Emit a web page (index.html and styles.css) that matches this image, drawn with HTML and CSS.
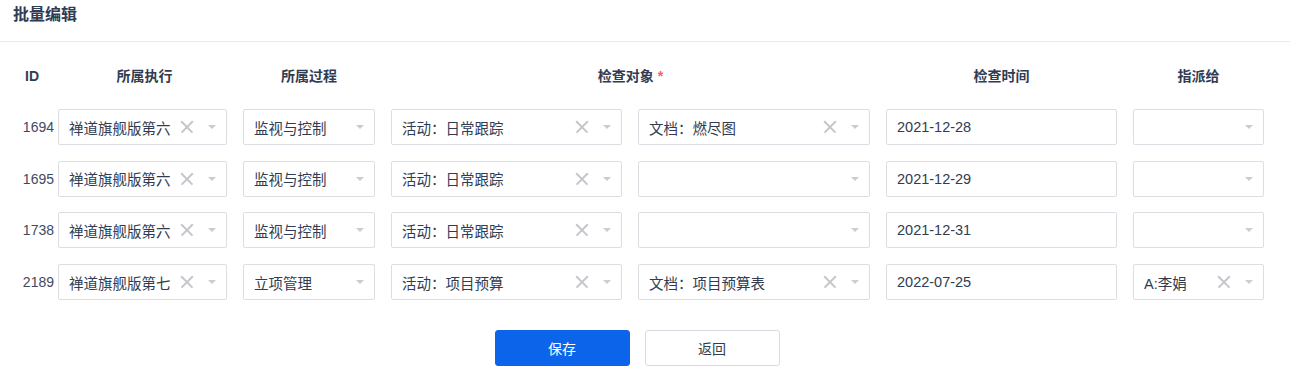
FILE: index.html
```html
<!DOCTYPE html>
<html lang="zh-CN">
<head>
    <meta charset="UTF-8">
    <title>批量编辑</title>
    <link rel="stylesheet" href="styles.css">
</head>
<body>
    <div class="modal-header">批量编辑</div>

    <div class="batch-form">
        <div class="grid">
            <!-- Header -->
            <div class="th th-id">ID</div>
            <div class="th">所属执行</div>
            <div class="th">所属过程</div>
            <div class="th span-2">检查对象 <span class="required">*</span></div>
            <div class="th">检查时间</div>
            <div class="th">指派给</div>

            <!-- Row 1694 -->
            <div class="td td-id">1694</div>
            <div class="td first"><div class="picker"><span class="value">禅道旗舰版第六</span><span class="clear"></span><span class="caret"></span></div></div>
            <div class="td"><div class="picker"><span class="value">监视与控制</span><span class="caret"></span></div></div>
            <div class="td"><div class="picker"><span class="value">活动：日常跟踪</span><span class="clear"></span><span class="caret"></span></div></div>
            <div class="td"><div class="picker"><span class="value">文档：燃尽图</span><span class="clear"></span><span class="caret"></span></div></div>
            <div class="td"><div class="input">2021-12-28</div></div>
            <div class="td"><div class="picker"><span class="value"></span><span class="caret"></span></div></div>

            <!-- Row 1695 -->
            <div class="td td-id">1695</div>
            <div class="td first"><div class="picker"><span class="value">禅道旗舰版第六</span><span class="clear"></span><span class="caret"></span></div></div>
            <div class="td"><div class="picker"><span class="value">监视与控制</span><span class="caret"></span></div></div>
            <div class="td"><div class="picker"><span class="value">活动：日常跟踪</span><span class="clear"></span><span class="caret"></span></div></div>
            <div class="td"><div class="picker"><span class="value"></span><span class="caret"></span></div></div>
            <div class="td"><div class="input">2021-12-29</div></div>
            <div class="td"><div class="picker"><span class="value"></span><span class="caret"></span></div></div>

            <!-- Row 1738 -->
            <div class="td td-id">1738</div>
            <div class="td first"><div class="picker"><span class="value">禅道旗舰版第六</span><span class="clear"></span><span class="caret"></span></div></div>
            <div class="td"><div class="picker"><span class="value">监视与控制</span><span class="caret"></span></div></div>
            <div class="td"><div class="picker"><span class="value">活动：日常跟踪</span><span class="clear"></span><span class="caret"></span></div></div>
            <div class="td"><div class="picker"><span class="value"></span><span class="caret"></span></div></div>
            <div class="td"><div class="input">2021-12-31</div></div>
            <div class="td"><div class="picker"><span class="value"></span><span class="caret"></span></div></div>

            <!-- Row 2189 -->
            <div class="td td-id">2189</div>
            <div class="td first"><div class="picker"><span class="value">禅道旗舰版第七</span><span class="clear"></span><span class="caret"></span></div></div>
            <div class="td"><div class="picker"><span class="value">立项管理</span><span class="caret"></span></div></div>
            <div class="td"><div class="picker"><span class="value">活动：项目预算</span><span class="clear"></span><span class="caret"></span></div></div>
            <div class="td"><div class="picker"><span class="value">文档：项目预算表</span><span class="clear"></span><span class="caret"></span></div></div>
            <div class="td"><div class="input">2022-07-25</div></div>
            <div class="td"><div class="picker"><span class="value">A:李娟</span><span class="clear"></span><span class="caret"></span></div></div>
        </div>

        <div class="actions">
            <button class="btn btn-primary">保存</button>
            <button class="btn">返回</button>
        </div>
    </div>
</body>
</html>
```

FILE: styles.css
```css
body {
    font-family: "Liberation Sans", "Noto Sans CJK SC", sans-serif;
    margin: 0;
    background-color: #fff;
    color: #313c52;
}

/* Header */
.modal-header {
    font-size: 16px;
    font-weight: bold;
    line-height: 20px;
    padding: 5px 13px 16px;
    border-bottom: 1px solid #ebebeb;
    color: #313c52;
}

/* Grid */
.batch-form {
    padding: 20px 18px 0 12px;
}

.grid {
    display: grid;
    grid-template-columns: 42px 181px 148px 247px 248px 247px 147px;
}

.th {
    font-size: 14px;
    font-weight: bold;
    text-align: center;
    line-height: 28px;
    padding: 0 8px;
    margin-bottom: 11px;
}

.th-id {
    text-align: left;
    padding-left: 13px;
}

.span-2 {
    grid-column: span 2;
}

.required {
    color: #ff5d5d;
}

.td {
    padding: 8px 8px 7.7px;
    font-size: 14.5px;
}

.td.first {
    padding-left: 4px;
}

.td-id {
    padding-left: 0;
    padding-right: 0;
    text-align: right;
    line-height: 36px;
    font-size: 14px;
    color: #3f4a61;
}

/* Pickers and inputs */
.picker,
.input {
    height: 36px;
    box-sizing: border-box;
    border: 1px solid #dcdee4;
    border-radius: 2px;
    display: flex;
    align-items: center;
    padding: 0 10px;
    color: #313c52;
}

.picker .value {
    flex: 1;
    white-space: nowrap;
    overflow: hidden;
}

.clear {
    width: 14px;
    height: 14px;
    margin-right: 14px;
    position: relative;
}

.clear::before,
.clear::after {
    content: "";
    position: absolute;
    left: -1px;
    top: 6px;
    width: 16px;
    height: 1.5px;
    background-color: #c4c6cc;
    transform: rotate(45deg);
}

.clear::after {
    transform: rotate(-45deg);
}

.caret {
    width: 0;
    height: 0;
    border-left: 4px solid transparent;
    border-right: 4px solid transparent;
    border-top: 4px solid #c9ccd6;
}

/* Buttons */
.actions {
    display: flex;
    justify-content: center;
    gap: 15px;
    margin-top: 22px;
    padding-right: 10px;
}

.btn {
    width: 135px;
    height: 36px;
    font-family: inherit;
    font-size: 14px;
    border: 1px solid #d8dae2;
    border-radius: 3px;
    background-color: #fff;
    color: #313c52;
    cursor: pointer;
}

.btn-primary {
    background-color: #0c64eb;
    border-color: #0c64eb;
    color: #fff;
}
```
